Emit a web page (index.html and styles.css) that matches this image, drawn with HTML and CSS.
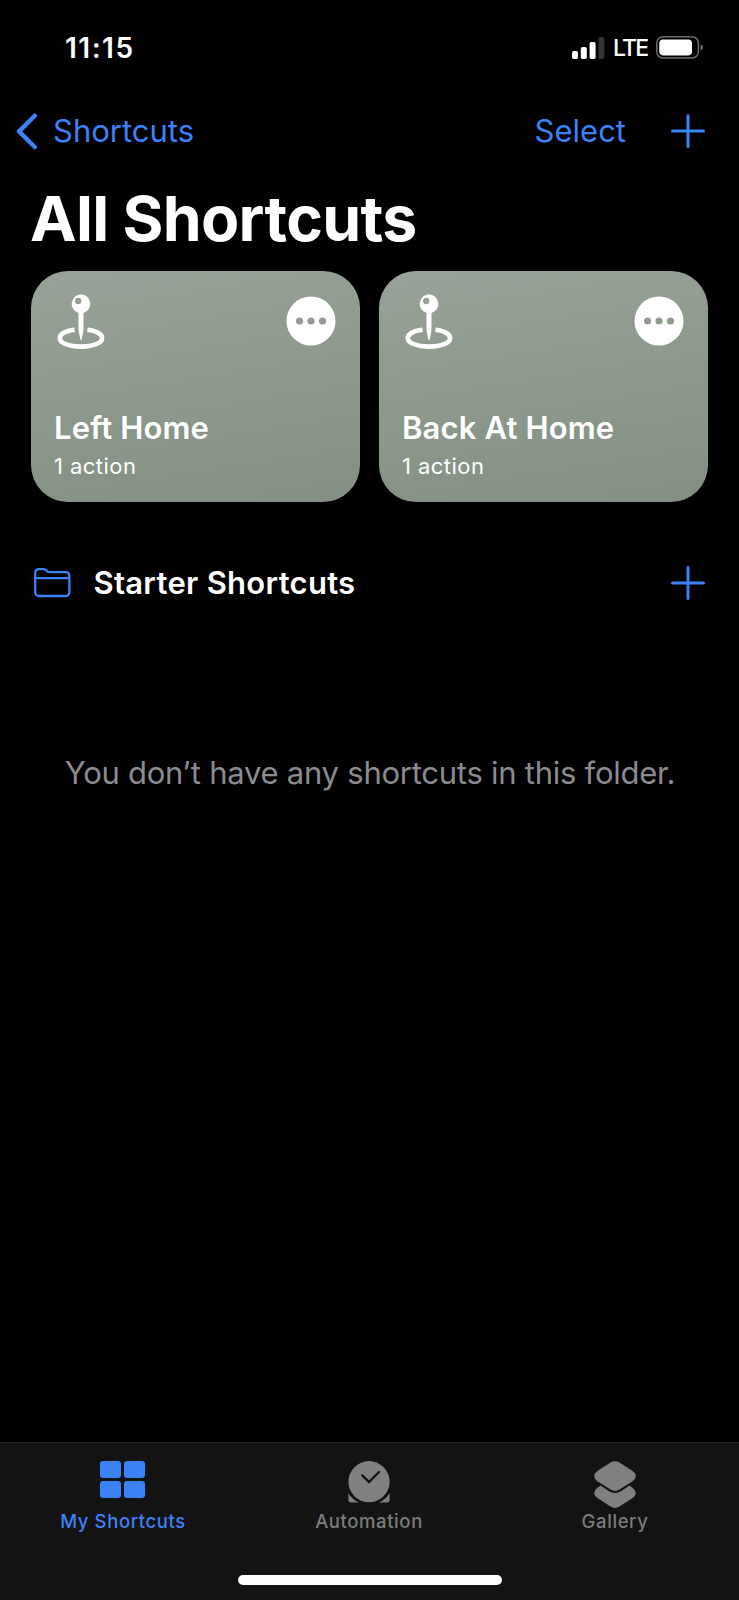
FILE: index.html
```html
<!DOCTYPE html>
<html lang="en">
<head>
<meta charset="utf-8">
<title>All Shortcuts</title>
<link rel="stylesheet" href="styles.css">
</head>
<body>
<svg class="defs" width="0" height="0" aria-hidden="true">
  <symbol id="plus" viewBox="0 0 34 34"><path d="M17 1.5V32.5M1.5 17H32.5" fill="none" stroke="currentColor" stroke-width="3" stroke-linecap="round"/></symbol>
  <symbol id="pin" viewBox="0 0 48 56">
    <path fill="#fff" fill-rule="evenodd" d="M24 0.3a9.6 9.6 0 0 1 2.5 18.8V36L24.7 45.4Q24 47 23.3 45.4L21.5 36V19.1A9.6 9.6 0 0 1 24 0.3ZM21.2 3.8a3.2 3.2 0 1 0 0 6.4a3.2 3.2 0 1 0 0-6.4Z"/>
    <path d="M17.6 35.8C8.5 36.9 2.8 40 2.8 44.2C2.8 49 12 52.6 24 52.6S45.1 49 45.1 44.2C45.1 40 39.4 36.9 30.4 35.8" fill="none" stroke="#fff" stroke-width="4.6"/>
  </symbol>
  <symbol id="more" viewBox="0 0 50 50"><path fill="#fff" fill-rule="evenodd" d="M25 .5a24.5 24.5 0 1 0 0 49a24.5 24.5 0 1 0 0-49ZM13.6 21.4a3.6 3.6 0 1 1 0 7.2a3.6 3.6 0 1 1 0-7.2ZM25 21.4a3.6 3.6 0 1 1 0 7.2a3.6 3.6 0 1 1 0-7.2ZM36.5 21.4a3.6 3.6 0 1 1 0 7.2a3.6 3.6 0 1 1 0-7.2Z"/></symbol>
</svg>
<div class="screen">
  <header class="status">
    <span class="time">11:15</span>
    <div class="indicators">
      <svg class="signal" viewBox="0 0 33 22"><g fill="#fff"><rect x="0" y="14" width="6" height="8" rx="1.7"/><rect x="8.8" y="10" width="6" height="12" rx="1.7"/><rect x="17.6" y="5" width="6" height="17" rx="1.7"/></g><rect x="26.4" y="0" width="6" height="22" rx="1.7" fill="#333"/></svg>
      <span class="carrier">LTE</span>
      <svg class="battery" viewBox="0 0 48 23"><rect x=".8" y=".8" width="41.6" height="21.2" rx="6.3" fill="none" stroke="#6d6d6d" stroke-width="1.5"/><rect x="3.3" y="3.4" width="32.7" height="16" rx="3.8" fill="#fff"/><path d="M44.6 8.2Q47 9 47 11.4T44.6 14.6Z" fill="#6d6d6d"/></svg>
    </div>
  </header>
  <nav class="nav">
    <a class="back"><svg class="chevron" viewBox="0 0 22 37"><path d="M18.8 2.7L3 18.4L18.8 34" fill="none" stroke="currentColor" stroke-width="4.4" stroke-linecap="round" stroke-linejoin="round"/></svg><span class="nav-label">Shortcuts</span></a>
    <a class="select nav-label">Select</a>
    <svg class="plus"><use href="#plus"/></svg>
  </nav>
  <h1 class="title">All Shortcuts</h1>
  <main class="content">
    <section class="cards">
      <article class="card">
        <div class="card-top"><svg class="pin"><use href="#pin"/></svg><svg class="more"><use href="#more"/></svg></div>
        <h2 class="card-name">Left Home</h2>
        <p class="card-actions">1 action</p>
      </article>
      <article class="card">
        <div class="card-top"><svg class="pin"><use href="#pin"/></svg><svg class="more"><use href="#more"/></svg></div>
        <h2 class="card-name">Back At Home</h2>
        <p class="card-actions">1 action</p>
      </article>
    </section>
    <section class="folder">
      <svg class="folder-icon" viewBox="0 0 37 30"><path d="M1.2 5.2Q1.2 1.2 5.2 1.2H9.2Q10.9 1.2 12 2.2L13.3 3.3Q14.2 4.1 15.7 4.1H31.6Q35.4 4.1 35.4 8V24Q35.4 28 31.4 28H5.2Q1.2 28 1.2 24ZM1.2 10.2H35.4" fill="none" stroke="currentColor" stroke-width="2.3"/></svg>
      <h2 class="folder-name">Starter Shortcuts</h2>
      <svg class="plus"><use href="#plus"/></svg>
    </section>
    <p class="empty">You don’t have any shortcuts in this folder.</p>
  </main>
  <footer class="tabbar">
    <div class="tabs">
      <a class="tab active"><svg class="tab-icon" viewBox="0 0 48 48"><g fill="currentColor"><rect x="1" y="0" width="21" height="17" rx="3"/><rect x="25" y="0" width="21" height="17" rx="3"/><rect x="1" y="20" width="21" height="17" rx="3"/><rect x="25" y="20" width="21" height="17" rx="3"/></g></svg><span class="tab-label">My Shortcuts</span></a>
      <a class="tab"><svg class="tab-icon" viewBox="0 0 48 48"><circle cx="24" cy="20.7" r="20.6" fill="#808080"/><path d="M17.3 14.4L24 21L34 11" fill="none" stroke="#131313" stroke-width="2.4" stroke-linecap="round"/><path d="M3.4 32.2Q7.3 38.6 14 41.4H5.6Q3.4 41.4 3.4 39.2ZM44.6 32.2Q40.7 38.6 34 41.4H42.4Q44.6 41.4 44.6 39.2Z" fill="#808080"/></svg><span class="tab-label">Automation</span></a>
      <a class="tab"><svg class="tab-icon" viewBox="0 0 48 48"><g fill="#808080"><path d="M19.5 1.4Q24 -1 28.5 1.4L41.6 10Q48 15 41.6 20.2L28.5 28.6Q24 31.3 19.5 28.6L6.4 20.2Q0 15 6.4 10Z"/><path d="M9.6 24.6L17.6 29.9Q24 34 30.4 29.9L38.4 24.6L41.6 26.8Q48 32 41.6 37L28.5 45.6Q24 48.2 19.5 45.6L6.4 37Q0 32 6.4 26.8Z"/></g></svg><span class="tab-label">Gallery</span></a>
    </div>
    <div class="home-indicator"></div>
  </footer>
</div>
</body>
</html>
```
FILE: styles.css
```css
* { box-sizing: border-box; margin: 0; padding: 0; }
body { background: #000; color: #fff; font-family: Inter, "Liberation Sans", sans-serif; }
svg { display: block; flex: none; }
.defs { position: absolute; }
.screen { width: 739px; height: 1600px; display: flex; flex-direction: column; overflow: hidden; white-space: nowrap; }

.status { height: 95px; display: flex; align-items: center; justify-content: space-between; padding: 0 35px 0 65px; }
.time { font-size: 28px; font-weight: 600; letter-spacing: 1.5px; }
.indicators { display: flex; align-items: center; }
.signal { width: 33px; height: 22px; margin-right: 8px; }
.carrier { width: 43px; font-size: 23px; font-weight: 500; letter-spacing: -1.8px; }
.battery { width: 48px; height: 23px; }

.nav { height: 72px; display: flex; align-items: center; padding: 0 34px 0 16px; color: #3b82f7; font-size: 31px; }
.back { display: flex; align-items: center; gap: 15px; flex: 1; }
.chevron { width: 22px; height: 37px; }
.nav-label { line-height: 38px; }
.select { margin-right: 45px; }
.plus { width: 34px; height: 34px; color: #3b82f7; }

.title { height: 104px; line-height: 102px; padding-left: 30px; font-size: 62.5px; font-weight: 700; letter-spacing: -0.7px; }

.content { flex: 1; display: flex; flex-direction: column; padding: 0 30px 0 31px; }
.cards { display: grid; grid-template-columns: 329px 329px; gap: 19px; }
.card { height: 231px; border-radius: 37px; padding: 23px 24px 0 23px; background: linear-gradient(171deg, #98a298 0%, #838f82 100%); }
.card-top { height: 114px; display: flex; justify-content: space-between; align-items: flex-start; padding-left: 3px; }
.pin { width: 48px; height: 56px; }
.more { width: 50px; height: 50px; margin-top: 2px; }
.card-name { height: 40px; line-height: 40px; font-size: 31px; font-weight: 600; letter-spacing: 0.15px; }
.card-actions { height: 38px; line-height: 36px; font-size: 22px; letter-spacing: 0.45px; }

.folder { height: 60px; margin-top: 51px; display: flex; align-items: center; padding: 0 4px 0 3px; }
.folder-icon { width: 37px; height: 30px; color: #3b82f7; }
.folder-name { flex: 1; line-height: 38px; padding-left: 22.5px; font-size: 31px; font-weight: 600; letter-spacing: 0.27px; }
.empty { margin-top: 140px; height: 40px; line-height: 40px; text-align: center; font-size: 31px; letter-spacing: -0.25px; color: #8b8b90; }

.tabbar { height: 158px; border-top: 1px solid #242424; background: #131313; display: flex; flex-direction: column; }
.tabs { height: 132px; display: grid; grid-template-columns: repeat(3, 1fr); padding: 18px 1px 0 0; }
.tab { display: flex; flex-direction: column; align-items: center; color: #7c7c7c; }
.tab.active { color: #3b82f7; }
.tab-icon { width: 48px; height: 48px; }
.tab-label { height: 24px; line-height: 24px; font-size: 18.5px; font-weight: 500; letter-spacing: 0.6px; }
.home-indicator { width: 264px; height: 10px; border-radius: 5px; background: #fff; align-self: center; }
```
